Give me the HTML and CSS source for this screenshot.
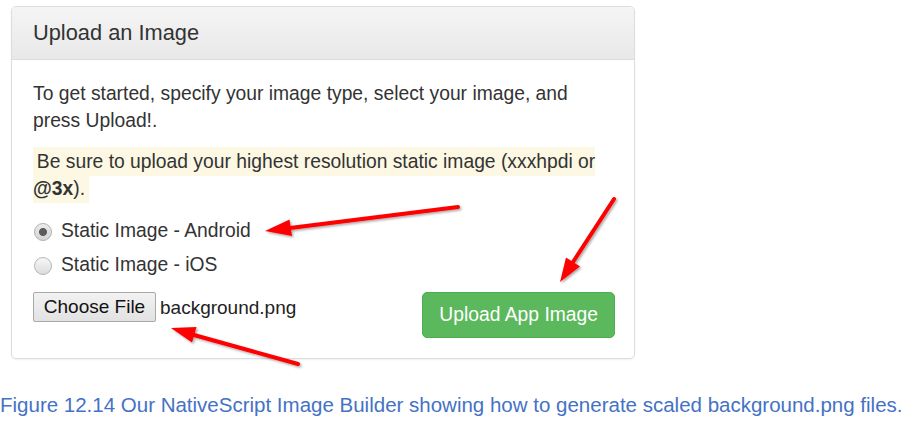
FILE: index.html
```html
<!DOCTYPE html>
<html lang="en">
<head>
<meta charset="utf-8">
<title>Upload an Image</title>
<link rel="stylesheet" href="styles.css">
</head>
<body>
<div class="page">
  <section class="panel">
    <header class="panel-heading">Upload an Image</header>
    <div class="panel-body">
      <p class="intro">To get started, specify your image type, select your image, and press Upload!.</p>
      <p class="note"><mark>Be sure to upload your highest resolution static image (xxxhpdi or <b>@3x</b>).</mark></p>
      <label class="radio"><input type="radio" name="type" checked><span>Static Image - Android</span></label>
      <label class="radio"><input type="radio" name="type"><span>Static Image - iOS</span></label>
      <div class="actions">
        <div class="file">
          <button type="button" class="file-btn">Choose File</button>
          <span class="file-name">background.png</span>
        </div>
        <button type="button" class="btn-success">Upload App Image</button>
      </div>
    </div>
  </section>
  <p class="caption">Figure 12.14 Our NativeScript Image Builder showing how to generate scaled background.png files.</p>

  <svg class="arrows" width="903" height="432" viewBox="0 0 903 432" aria-hidden="true">
    <defs>
      <filter id="sh" x="-20%" y="-20%" width="140%" height="140%">
        <feDropShadow dx="1.5" dy="1.5" stdDeviation="1.2" flood-color="#000" flood-opacity="0.35"/>
      </filter>
    </defs>
    <g fill="#ff0000" stroke="#ff0000" filter="url(#sh)">
      <line x1="458" y1="207" x2="290" y2="228" stroke-width="4" stroke-linecap="round"/>
      <polygon points="265,231 292,236 289.5,219.5" stroke="none"/>
      <line x1="614" y1="199" x2="573" y2="262" stroke-width="4" stroke-linecap="round"/>
      <polygon points="560,282 580,266.5 566,257.5" stroke="none"/>
      <line x1="298" y1="364" x2="194" y2="335" stroke-width="4" stroke-linecap="round"/>
      <polygon points="171,328 192,342.5 196.5,327" stroke="none"/>
    </g>
  </svg>
</div>
</body>
</html>
```

FILE: styles.css
```css
* { box-sizing: border-box; }

html, body {
  margin: 0;
  padding: 0;
  background: #fff;
}

body {
  font-family: "Liberation Sans", Arial, sans-serif;
  color: #333;
  width: 903px;
  height: 432px;
  overflow: hidden;
}

.page {
  position: relative;
  width: 903px;
  height: 432px;
  padding-top: 6px;
}

.panel {
  margin-left: 11px;
  width: 624px;
  border: 1px solid #dddddd;
  border-radius: 5px;
  background: #fff;
  box-shadow: 0 1px 2px rgba(0, 0, 0, 0.06);
}

.panel-heading {
  height: 53px;
  padding: 14px 21px;
  font-size: 21.8px;
  line-height: 24px;
  color: #333;
  background: linear-gradient(#f5f5f5, #e8e8e8);
  border-bottom: 1px solid #dddddd;
  border-radius: 4px 4px 0 0;
}

.panel-body {
  padding: 20px 24px 20px 21px;
  font-size: 19.3px;
  line-height: 27px;
}

.intro {
  margin: 0 0 14px;
}

.note {
  margin: 0 0 15px;
}

mark {
  background: #fcf8e3;
  color: #333;
  padding: 0.2em;
}

.radio {
  display: flex;
  align-items: center;
  height: 27px;
  margin-bottom: 7px;
}

.radio input {
  appearance: none;
  -webkit-appearance: none;
  width: 18px;
  height: 18px;
  margin: 2px 9px 0 1px;
  border-radius: 50%;
  border: 1px solid #b6b6b6;
  background: linear-gradient(#f7f7f7, #dcdcdc);
  flex: none;
}

.radio input:checked {
  background: radial-gradient(circle, #5c5c5c 0 3.6px, transparent 4.4px), linear-gradient(#ececec, #d4d4d4);
  border-color: #b0b0b0;
}

.actions {
  display: flex;
  justify-content: space-between;
  align-items: flex-start;
  margin-top: 14px;
  margin-right: -5px;
}

.file {
  display: flex;
  align-items: center;
  height: 30px;
}

.file-btn {
  width: 123px;
  height: 30px;
  margin: 0 4px 0 0;
  padding: 0;
  font-family: "Liberation Sans", Arial, sans-serif;
  font-size: 19px;
  color: #111;
  background: linear-gradient(#f2f2f2, #e2e2e2);
  border: 1px solid #a9a9a9;
  border-radius: 2px;
}

.file-name {
  font-size: 19px;
  color: #222;
}

.btn-success {
  height: 46px;
  padding: 0 16px;
  font-family: "Liberation Sans", Arial, sans-serif;
  font-size: 19.3px;
  line-height: 44px;
  color: #fff;
  background: #5cb85c;
  border: 1px solid #4cae4c;
  border-radius: 5px;
}

.caption {
  margin: 34px 0 0 0;
  font-size: 20.5px;
  line-height: 24px;
  color: #4472c4;
  white-space: nowrap;
}

.arrows {
  position: absolute;
  left: 0;
  top: 0;
  pointer-events: none;
}
```
